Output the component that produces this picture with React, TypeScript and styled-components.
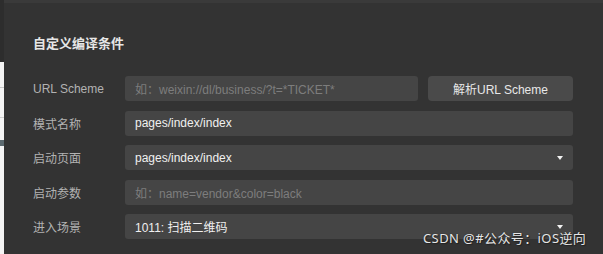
import React from "react";
import styled, { createGlobalStyle } from "styled-components";

const GlobalStyle = createGlobalStyle`
  html, body {
    margin: 0;
    padding: 0;
    background: #2f2f2f;
  }
  body {
    font-family: "Liberation Sans", "Noto Sans CJK SC", sans-serif;
  }
`;

const Page = styled.div`
  position: relative;
  display: flex;
  width: 603px;
  height: 254px;
  overflow: hidden;
  background: #2f2f2f;
`;

const Backdrop = styled.div`
  width: 4px;
  display: flex;
  flex-direction: column;
`;

const BackdropTop = styled.div`
  height: 62px;
  background: #2d2d2d;
`;

const BackdropSheet = styled.div`
  flex: 1;
  background: linear-gradient(
    to bottom,
    #f4f4f4 0 25px,
    #c8c8c8 25px 26px,
    #f4f4f4 26px 55px,
    #d0d0d0 55px 56px,
    #f4f4f4 56px 78px,
    #5c6a70 78px 84px,
    #f4f4f4 84px
  );
`;

const Dialog = styled.div`
  flex: 1;
  display: flex;
  flex-direction: column;
  background: #333333;
  border-top: 3px solid #3a3a3a;
  padding: 0 30px 0 29px;
`;

const Title = styled.h1`
  margin: 30px 0 0;
  height: 22px;
  font-size: 13px;
  font-weight: 700;
  line-height: 22px;
  color: #e6e6e6;
`;

const Form = styled.div`
  margin-top: 21px;
  display: grid;
  grid-template-columns: 92px 1fr;
  grid-auto-rows: 25px;
  row-gap: 9.5px;
  align-items: center;
`;

const Label = styled.span`
  font-size: 12px;
  color: #b2b2b2;
`;

const Controls = styled.div`
  display: flex;
  gap: 10px;
  height: 100%;
`;

const Field = styled.div<{ $placeholder?: boolean }>`
  flex: 1;
  display: flex;
  align-items: center;
  justify-content: space-between;
  padding: 0 10px;
  background: #454545;
  border-radius: 3px;
  font-size: 12px;
  color: ${(p) => (p.$placeholder ? "#7d7d7d" : "#f0f0f0")};
  white-space: nowrap;
  overflow: hidden;
`;

const Button = styled.div`
  width: 145px;
  display: flex;
  align-items: center;
  justify-content: center;
  background: #4a4a4a;
  border-radius: 4px;
  font-size: 12px;
  color: #e8e8e8;
`;

const Caret = styled.span`
  width: 0;
  height: 0;
  border-left: 3.5px solid transparent;
  border-right: 3.5px solid transparent;
  border-top: 4px solid #f2f2f2;
`;

const Watermark = styled.div`
  position: absolute;
  left: 423px;
  top: 228px;
  font-family: "Noto Sans", "Noto Sans CJK SC", sans-serif;
  font-size: 13px;
  color: #e6e6e6;
  letter-spacing: 0.4px;
  text-shadow: 0 0 1px #222, 1px 1px 1px #222;
`;

const rows: { label: string; value: string; placeholder?: boolean; select?: boolean }[] = [
  { label: "模式名称", value: "pages/index/index" },
  { label: "启动页面", value: "pages/index/index", select: true },
  { label: "启动参数", value: "如：name=vendor&color=black", placeholder: true },
  { label: "进入场景", value: "1011: 扫描二维码", select: true },
];

export default function App() {
  return (
    <Page>
      <GlobalStyle />
      <Backdrop>
        <BackdropTop />
        <BackdropSheet />
      </Backdrop>
      <Dialog>
        <Title>自定义编译条件</Title>
        <Form>
          <Label>URL Scheme</Label>
          <Controls>
            <Field $placeholder>如：weixin://dl/business/?t=*TICKET*</Field>
            <Button>解析URL Scheme</Button>
          </Controls>
          {rows.map((row) => (
            <React.Fragment key={row.label}>
              <Label>{row.label}</Label>
              <Controls>
                <Field $placeholder={row.placeholder}>
                  {row.value}
                  {row.select && <Caret />}
                </Field>
              </Controls>
            </React.Fragment>
          ))}
        </Form>
      </Dialog>
      <Watermark>CSDN @#公众号：iOS逆向</Watermark>
    </Page>
  );
}
